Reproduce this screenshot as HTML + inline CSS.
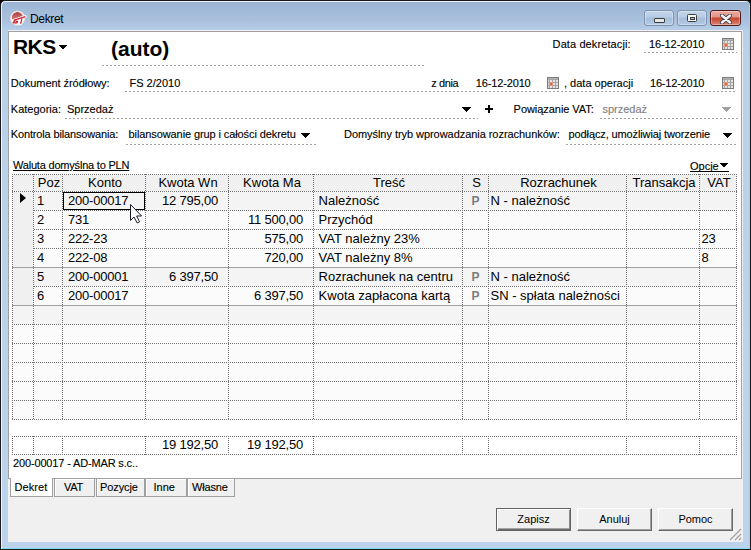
<!DOCTYPE html><html><head><meta charset="utf-8"><style>
html,body{margin:0;padding:0;}
body{width:751px;height:550px;position:relative;overflow:hidden;background:#000;font-family:"Liberation Sans", sans-serif;}
#win{position:absolute;left:0;top:0;width:751px;height:550px;box-sizing:border-box;border:1px solid #1a1a1a;border-radius:5px 5px 0 0;
 background:linear-gradient(180deg,#9bb4d4 0px,#a9c1de 20px,#b7cfe8 30px,#bad1ea 60px,#bcd3eb 550px);
 box-shadow:inset 1px 1px 0 rgba(255,255,255,0.8), inset -1px -1px 0 #7fe0f4;}
.t{position:absolute;white-space:nowrap;}
.g{position:absolute;white-space:nowrap;font-size:13px;line-height:16px;color:#000;}
.cb{position:absolute;top:10px;height:14px;border:1px solid #7d92ae;border-radius:3px;box-sizing:content-box;
 background:linear-gradient(180deg,#c4d5eb 0,#b8cce5 6px,#a6bddb 7px,#b4cbe6 14px);box-shadow:inset 0 0 0 1px rgba(255,255,255,0.35)}
.cl{border-color:#4d1a1a;background:linear-gradient(180deg,#eca89e 0,#e3968a 6px,#c4442c 7px,#dc8470 14px);}
.btn{position:absolute;top:508px;width:75px;height:23px;box-sizing:border-box;background:#f0f0f0;font-size:11px;line-height:21px;text-align:center;color:#000;
 border-top:1px solid #fff;border-left:1px solid #fff;border-right:1px solid #696969;border-bottom:1px solid #696969;box-shadow:inset -1px -1px 0 #a0a0a0;}
.def{border:1px solid #646464;box-shadow:inset 1px 1px 0 #fff, inset 0 -1px 0 #6a6a6a, inset -1px -1px 0 #8a8a8a, inset 0 -2px 0 #a8a8a8;}
</style></head><body>
<div id="win"></div>
<svg style="position:absolute;left:6px;top:8px" width="24" height="20" viewBox="0 0 24 20"><defs><linearGradient id="dg" x1="0" y1="0" x2="0" y2="1"><stop offset="0" stop-color="#a83c3c"/><stop offset="1" stop-color="#d88282"/></linearGradient></defs><circle cx="11.6" cy="10.2" r="7.1" fill="#fdfbfb" stroke="#e2dcdc" stroke-width="1.1"/><path d="M6 11.6 A5.5 5.5 0 0 1 16.8 8 Z" fill="url(#dg)"/><path d="M7.6 12.4 L19.4 8.6 M9.9 11.6 L6.9 14.8 L11 14.8 L11.6 13.4 L9.6 13.4 M15.9 10.6 L14.6 15.8" stroke="#fff" stroke-width="2.6" fill="none" stroke-linejoin="round" stroke-linecap="round"/><path d="M7.6 12.4 L19.4 8.6 M9.9 11.6 L6.9 14.8 L11 14.8 L11.6 13.4 L9.6 13.4 M15.9 10.6 L14.6 15.8" stroke="#c8202a" stroke-width="1.2" fill="none" stroke-linejoin="round"/></svg>
<div class="t" style="left:30px;top:11.84px;font-size:12px;line-height:14px;color:#000;font-weight:normal;letter-spacing:-0.35px;">Dekret</div>
<div class="cb" style="left:644px;width:28px"><div style="position:absolute;left:9px;top:7px;width:9px;height:3px;border:1px solid #3d3d3d;border-radius:1px;background:#e6e6e6"></div></div>
<div class="cb" style="left:677px;width:28px"><div style="position:absolute;left:9px;top:3px;width:8px;height:6px;border:1.5px solid #3d3d3d;border-radius:1.5px;background:#f6f6f6"><div style="position:absolute;left:2px;top:2px;width:3px;height:1px;border:1px solid #3d3d3d;background:#a9bfdc"></div></div></div>
<div class="cb cl" style="left:710px;width:29px"><svg style="position:absolute;left:9px;top:2.5px" width="12" height="10" viewBox="0 0 12 10"><path d="M2 1.5 L10 8.5 M10 1.5 L2 8.5" stroke="#3a3a4a" stroke-width="4.2" stroke-linecap="round"/><path d="M2 1.5 L10 8.5 M10 1.5 L2 8.5" stroke="#f4f4f4" stroke-width="2.4" stroke-linecap="round"/></svg></div>
<div style="position:absolute;left:8px;top:30px;width:735px;height:512px;background:#f0f0f0"></div>
<div style="position:absolute;left:8px;top:31px;width:734px;height:448px;background:#fff;border:1px solid #a0a0a0;box-sizing:border-box"></div>
<div class="t" style="left:13px;top:33.72px;font-size:21px;line-height:25px;color:#000;font-weight:bold;letter-spacing:-0.6px;">RKS</div>
<svg style="position:absolute;left:59px;top:45px" width="8" height="4" shape-rendering="crispEdges" fill="#000"><rect x="0" y="0" width="8" height="1"/><rect x="1" y="1" width="6" height="1"/><rect x="2" y="2" width="4" height="1"/><rect x="3" y="3" width="2" height="1"/></svg>
<div class="t" style="left:111px;top:35.72px;font-size:21px;line-height:25px;color:#000;font-weight:bold;letter-spacing:0px;">(auto)</div>
<div style="position:absolute;left:102px;top:65px;width:322px;height:1px;background:repeating-linear-gradient(90deg,#a0a0a0 0 2px,transparent 2px 4px);background-position:0px 0"></div>
<div class="t" style="left:552.6px;top:38.09px;font-size:11px;line-height:13px;color:#000;font-weight:normal;letter-spacing:0.1px;-webkit-text-stroke:0.12px #000;">Data dekretacji:</div>
<div class="t" style="left:649px;top:38.09px;font-size:11px;line-height:13px;color:#000;font-weight:normal;letter-spacing:-0.1px;-webkit-text-stroke:0.12px #000;">16-12-2010</div>
<svg style="position:absolute;left:722px;top:38px" width="12" height="12" viewBox="0 0 12 12" shape-rendering="crispEdges"><rect x="0" y="0" width="12" height="12" fill="#7c7c7c"/><rect x="1" y="1" width="10" height="10" fill="#a4a4a4"/><rect x="1" y="1" width="10" height="1" fill="#b4b4b4"/><rect x="3" y="3" width="2" height="2" fill="#e4e4e4"/><rect x="3" y="6" width="2" height="2" fill="#e4e4e4"/><rect x="3" y="9" width="2" height="2" fill="#e4e4e4"/><rect x="6" y="3" width="2" height="2" fill="#e4e4e4"/><rect x="6" y="6" width="2" height="2" fill="#e4e4e4"/><rect x="6" y="9" width="2" height="2" fill="#e4e4e4"/><rect x="9" y="3" width="2" height="2" fill="#e4e4e4"/><rect x="9" y="6" width="2" height="2" fill="#e4e4e4"/><rect x="9" y="9" width="2" height="2" fill="#e4e4e4"/><rect x="1" y="3" width="1" height="2" fill="#d8d8d8"/><rect x="1" y="6" width="1" height="2" fill="#d8d8d8"/><rect x="1" y="9" width="1" height="2" fill="#d8d8d8"/><rect x="2" y="5" width="4" height="4" fill="#d99a86"/><rect x="3" y="6" width="2" height="2" fill="#f0603a"/></svg>
<div style="position:absolute;left:644px;top:52px;width:93px;height:1px;background:repeating-linear-gradient(90deg,#a0a0a0 0 2px,transparent 2px 4px);background-position:0px 0"></div>
<div class="t" style="left:10.8px;top:77.09px;font-size:11px;line-height:13px;color:#000;font-weight:normal;letter-spacing:-0.05px;-webkit-text-stroke:0.12px #000;">Dokument źródłowy:</div>
<div class="t" style="left:129.5px;top:77.09px;font-size:11px;line-height:13px;color:#000;font-weight:normal;letter-spacing:0px;-webkit-text-stroke:0.12px #000;">FS 2/2010</div>
<div class="t" style="left:431.2px;top:77.09px;font-size:11px;line-height:13px;color:#000;font-weight:normal;letter-spacing:-0.4px;-webkit-text-stroke:0.12px #000;">z dnia</div>
<div class="t" style="left:475.8px;top:77.09px;font-size:11px;line-height:13px;color:#000;font-weight:normal;letter-spacing:-0.15px;-webkit-text-stroke:0.12px #000;">16-12-2010</div>
<svg style="position:absolute;left:547px;top:77px" width="12" height="12" viewBox="0 0 12 12" shape-rendering="crispEdges"><rect x="0" y="0" width="12" height="12" fill="#7c7c7c"/><rect x="1" y="1" width="10" height="10" fill="#a4a4a4"/><rect x="1" y="1" width="10" height="1" fill="#b4b4b4"/><rect x="3" y="3" width="2" height="2" fill="#e4e4e4"/><rect x="3" y="6" width="2" height="2" fill="#e4e4e4"/><rect x="3" y="9" width="2" height="2" fill="#e4e4e4"/><rect x="6" y="3" width="2" height="2" fill="#e4e4e4"/><rect x="6" y="6" width="2" height="2" fill="#e4e4e4"/><rect x="6" y="9" width="2" height="2" fill="#e4e4e4"/><rect x="9" y="3" width="2" height="2" fill="#e4e4e4"/><rect x="9" y="6" width="2" height="2" fill="#e4e4e4"/><rect x="9" y="9" width="2" height="2" fill="#e4e4e4"/><rect x="1" y="3" width="1" height="2" fill="#d8d8d8"/><rect x="1" y="6" width="1" height="2" fill="#d8d8d8"/><rect x="1" y="9" width="1" height="2" fill="#d8d8d8"/><rect x="2" y="5" width="4" height="4" fill="#d99a86"/><rect x="3" y="6" width="2" height="2" fill="#f0603a"/></svg>
<div class="t" style="left:564px;top:77.09px;font-size:11px;line-height:13px;color:#000;font-weight:normal;letter-spacing:0px;-webkit-text-stroke:0.12px #000;">, data operacji</div>
<div class="t" style="left:650px;top:77.09px;font-size:11px;line-height:13px;color:#000;font-weight:normal;letter-spacing:-0.2px;-webkit-text-stroke:0.12px #000;">16-12-2010</div>
<svg style="position:absolute;left:722px;top:77px" width="12" height="12" viewBox="0 0 12 12" shape-rendering="crispEdges"><rect x="0" y="0" width="12" height="12" fill="#7c7c7c"/><rect x="1" y="1" width="10" height="10" fill="#a4a4a4"/><rect x="1" y="1" width="10" height="1" fill="#b4b4b4"/><rect x="3" y="3" width="2" height="2" fill="#e4e4e4"/><rect x="3" y="6" width="2" height="2" fill="#e4e4e4"/><rect x="3" y="9" width="2" height="2" fill="#e4e4e4"/><rect x="6" y="3" width="2" height="2" fill="#e4e4e4"/><rect x="6" y="6" width="2" height="2" fill="#e4e4e4"/><rect x="6" y="9" width="2" height="2" fill="#e4e4e4"/><rect x="9" y="3" width="2" height="2" fill="#e4e4e4"/><rect x="9" y="6" width="2" height="2" fill="#e4e4e4"/><rect x="9" y="9" width="2" height="2" fill="#e4e4e4"/><rect x="1" y="3" width="1" height="2" fill="#d8d8d8"/><rect x="1" y="6" width="1" height="2" fill="#d8d8d8"/><rect x="1" y="9" width="1" height="2" fill="#d8d8d8"/><rect x="2" y="5" width="4" height="4" fill="#d99a86"/><rect x="3" y="6" width="2" height="2" fill="#f0603a"/></svg>
<div style="position:absolute;left:125px;top:91px;width:612px;height:1px;background:repeating-linear-gradient(90deg,#a0a0a0 0 2px,transparent 2px 4px);background-position:0px 0"></div>
<div class="t" style="left:10.8px;top:103.19px;font-size:11px;line-height:13px;color:#000;font-weight:normal;letter-spacing:0px;-webkit-text-stroke:0.12px #000;">Kategoria:</div>
<div class="t" style="left:67px;top:103.19px;font-size:11px;line-height:13px;color:#000;font-weight:normal;letter-spacing:0px;-webkit-text-stroke:0.12px #000;">Sprzedaż</div>
<svg style="position:absolute;left:462px;top:107px" width="9" height="5" shape-rendering="crispEdges" fill="#000"><rect x="0" y="0" width="9" height="1"/><rect x="1" y="1" width="7" height="1"/><rect x="2" y="2" width="5" height="1"/><rect x="3" y="3" width="3" height="1"/><rect x="4" y="4" width="1" height="1"/></svg>
<div style="position:absolute;left:65px;top:118px;width:413px;height:1px;background:repeating-linear-gradient(90deg,#a0a0a0 0 2px,transparent 2px 4px);background-position:0px 0"></div>
<div style="position:absolute;left:485px;top:108px;width:8px;height:2px;background:#000"></div>
<div style="position:absolute;left:488px;top:105px;width:2px;height:8px;background:#000"></div>
<div class="t" style="left:513.6px;top:103.19px;font-size:11px;line-height:13px;color:#000;font-weight:normal;letter-spacing:-0.05px;-webkit-text-stroke:0.12px #000;">Powiązanie VAT:</div>
<div class="t" style="left:602.4px;top:103.19px;font-size:11px;line-height:13px;color:#808080;font-weight:normal;letter-spacing:0px;-webkit-text-stroke:0.12px #808080;">sprzedaż</div>
<svg style="position:absolute;left:722px;top:107px" width="9" height="5" shape-rendering="crispEdges" fill="#a0a0a0"><rect x="0" y="0" width="9" height="1"/><rect x="1" y="1" width="7" height="1"/><rect x="2" y="2" width="5" height="1"/><rect x="3" y="3" width="3" height="1"/><rect x="4" y="4" width="1" height="1"/></svg>
<div style="position:absolute;left:600px;top:118px;width:138px;height:1px;background:repeating-linear-gradient(90deg,#a0a0a0 0 2px,transparent 2px 4px);background-position:0px 0"></div>
<div class="t" style="left:10.8px;top:128.39px;font-size:11px;line-height:13px;color:#000;font-weight:normal;letter-spacing:-0.15px;-webkit-text-stroke:0.12px #000;">Kontrola bilansowania:</div>
<div class="t" style="left:128.6px;top:128.39px;font-size:11px;line-height:13px;color:#000;font-weight:normal;letter-spacing:-0.1px;-webkit-text-stroke:0.12px #000;">bilansowanie grup i całości dekretu</div>
<svg style="position:absolute;left:301px;top:133px" width="9" height="5" shape-rendering="crispEdges" fill="#000"><rect x="0" y="0" width="9" height="1"/><rect x="1" y="1" width="7" height="1"/><rect x="2" y="2" width="5" height="1"/><rect x="3" y="3" width="3" height="1"/><rect x="4" y="4" width="1" height="1"/></svg>
<div style="position:absolute;left:126px;top:144px;width:190px;height:1px;background:repeating-linear-gradient(90deg,#a0a0a0 0 2px,transparent 2px 4px);background-position:0px 0"></div>
<div class="t" style="left:344px;top:128.39px;font-size:11px;line-height:13px;color:#000;font-weight:normal;letter-spacing:-0.05px;-webkit-text-stroke:0.12px #000;">Domyślny tryb wprowadzania rozrachunków:</div>
<div class="t" style="left:568.6px;top:128.39px;font-size:11px;line-height:13px;color:#000;font-weight:normal;letter-spacing:-0.12px;-webkit-text-stroke:0.12px #000;">podłącz, umożliwiaj tworzenie</div>
<svg style="position:absolute;left:723px;top:133px" width="9" height="5" shape-rendering="crispEdges" fill="#000"><rect x="0" y="0" width="9" height="1"/><rect x="1" y="1" width="7" height="1"/><rect x="2" y="2" width="5" height="1"/><rect x="3" y="3" width="3" height="1"/><rect x="4" y="4" width="1" height="1"/></svg>
<div style="position:absolute;left:566px;top:144px;width:171px;height:1px;background:repeating-linear-gradient(90deg,#a0a0a0 0 2px,transparent 2px 4px);background-position:0px 0"></div>
<div class="t" style="left:13px;top:159.19px;font-size:11px;line-height:13px;color:#000;font-weight:normal;letter-spacing:-0.2px;-webkit-text-stroke:0.12px #000;text-decoration:underline">Waluta domyślna to PLN</div>
<div class="t" style="left:690px;top:159.89px;font-size:11px;line-height:13px;color:#000;font-weight:normal;letter-spacing:0px;-webkit-text-stroke:0.12px #000;">Opcje</div>
<div style="position:absolute;left:690px;top:171px;width:39px;height:1px;background:#000"></div>
<svg style="position:absolute;left:720px;top:163px" width="8" height="4" shape-rendering="crispEdges" fill="#000"><rect x="0" y="0" width="8" height="1"/><rect x="1" y="1" width="6" height="1"/><rect x="2" y="2" width="4" height="1"/><rect x="3" y="3" width="2" height="1"/></svg>
<div style="position:absolute;left:13px;top:175px;width:723px;height:16px;background:#f0f0f0"></div>
<div style="position:absolute;left:34px;top:192px;width:702px;height:18px;background:#f4f4f4"></div>
<div style="position:absolute;left:34px;top:211px;width:702px;height:18px;background:#fbfbfb"></div>
<div style="position:absolute;left:34px;top:230px;width:702px;height:18px;background:#fbfbfb"></div>
<div style="position:absolute;left:34px;top:249px;width:702px;height:18px;background:#fbfbfb"></div>
<div style="position:absolute;left:34px;top:268px;width:702px;height:18px;background:#f4f4f4"></div>
<div style="position:absolute;left:34px;top:287px;width:702px;height:18px;background:#fbfbfb"></div>
<div style="position:absolute;left:34px;top:306px;width:702px;height:18px;background:#f4f4f4"></div>
<div style="position:absolute;left:34px;top:325px;width:702px;height:18px;background:#fbfbfb"></div>
<div style="position:absolute;left:34px;top:344px;width:702px;height:18px;background:#fbfbfb"></div>
<div style="position:absolute;left:34px;top:363px;width:702px;height:18px;background:#fbfbfb"></div>
<div style="position:absolute;left:34px;top:382px;width:702px;height:18px;background:#fbfbfb"></div>
<div style="position:absolute;left:34px;top:401px;width:702px;height:18px;background:#fbfbfb"></div>
<div style="position:absolute;left:13px;top:192px;width:20px;height:113px;background:#f0f0f0"></div>
<div style="position:absolute;left:13px;top:306px;width:20px;height:18px;background:#f4f4f4"></div>
<div style="position:absolute;left:13px;top:325px;width:20px;height:94px;background:#fbfbfb"></div>
<div style="position:absolute;left:12px;top:174px;width:725px;height:1px;background:repeating-linear-gradient(90deg,#6e6e6e 0 1px,transparent 1px 2px);background-position:0px 0"></div>
<div style="position:absolute;left:12px;top:191px;width:725px;height:1px;background:repeating-linear-gradient(90deg,#6e6e6e 0 1px,transparent 1px 2px);background-position:0px 0"></div>
<div style="position:absolute;left:34px;top:210px;width:703px;height:1px;background:repeating-linear-gradient(90deg,#6e6e6e 0 1px,transparent 1px 2px);background-position:0px 0"></div>
<div style="position:absolute;left:34px;top:229px;width:703px;height:1px;background:repeating-linear-gradient(90deg,#6e6e6e 0 1px,transparent 1px 2px);background-position:0px 0"></div>
<div style="position:absolute;left:34px;top:248px;width:703px;height:1px;background:repeating-linear-gradient(90deg,#6e6e6e 0 1px,transparent 1px 2px);background-position:0px 0"></div>
<div style="position:absolute;left:12px;top:267px;width:725px;height:1px;background:#a0a0a0"></div>
<div style="position:absolute;left:34px;top:286px;width:703px;height:1px;background:repeating-linear-gradient(90deg,#6e6e6e 0 1px,transparent 1px 2px);background-position:0px 0"></div>
<div style="position:absolute;left:12px;top:305px;width:725px;height:1px;background:#a0a0a0"></div>
<div style="position:absolute;left:12px;top:324px;width:725px;height:1px;background:repeating-linear-gradient(90deg,#6e6e6e 0 1px,transparent 1px 2px);background-position:0px 0"></div>
<div style="position:absolute;left:12px;top:343px;width:725px;height:1px;background:repeating-linear-gradient(90deg,#6e6e6e 0 1px,transparent 1px 2px);background-position:0px 0"></div>
<div style="position:absolute;left:12px;top:362px;width:725px;height:1px;background:repeating-linear-gradient(90deg,#6e6e6e 0 1px,transparent 1px 2px);background-position:0px 0"></div>
<div style="position:absolute;left:12px;top:381px;width:725px;height:1px;background:repeating-linear-gradient(90deg,#6e6e6e 0 1px,transparent 1px 2px);background-position:0px 0"></div>
<div style="position:absolute;left:12px;top:400px;width:725px;height:1px;background:repeating-linear-gradient(90deg,#6e6e6e 0 1px,transparent 1px 2px);background-position:0px 0"></div>
<div style="position:absolute;left:12px;top:419px;width:725px;height:1px;background:repeating-linear-gradient(90deg,#6e6e6e 0 1px,transparent 1px 2px);background-position:0px 0"></div>
<div style="position:absolute;left:12px;top:174px;width:1px;height:246px;background:repeating-linear-gradient(180deg,#6e6e6e 0 1px,transparent 1px 2px);background-position:0 0px"></div>
<div style="position:absolute;left:33px;top:174px;width:1px;height:246px;background:repeating-linear-gradient(180deg,#6e6e6e 0 1px,transparent 1px 2px);background-position:0 0px"></div>
<div style="position:absolute;left:62px;top:174px;width:1px;height:246px;background:repeating-linear-gradient(180deg,#6e6e6e 0 1px,transparent 1px 2px);background-position:0 0px"></div>
<div style="position:absolute;left:145px;top:174px;width:1px;height:246px;background:repeating-linear-gradient(180deg,#6e6e6e 0 1px,transparent 1px 2px);background-position:0 0px"></div>
<div style="position:absolute;left:228px;top:174px;width:1px;height:246px;background:repeating-linear-gradient(180deg,#6e6e6e 0 1px,transparent 1px 2px);background-position:0 0px"></div>
<div style="position:absolute;left:313px;top:174px;width:1px;height:246px;background:repeating-linear-gradient(180deg,#6e6e6e 0 1px,transparent 1px 2px);background-position:0 0px"></div>
<div style="position:absolute;left:462px;top:174px;width:1px;height:246px;background:repeating-linear-gradient(180deg,#6e6e6e 0 1px,transparent 1px 2px);background-position:0 0px"></div>
<div style="position:absolute;left:488px;top:174px;width:1px;height:246px;background:repeating-linear-gradient(180deg,#6e6e6e 0 1px,transparent 1px 2px);background-position:0 0px"></div>
<div style="position:absolute;left:626px;top:174px;width:1px;height:246px;background:repeating-linear-gradient(180deg,#6e6e6e 0 1px,transparent 1px 2px);background-position:0 0px"></div>
<div style="position:absolute;left:699px;top:174px;width:1px;height:246px;background:repeating-linear-gradient(180deg,#6e6e6e 0 1px,transparent 1px 2px);background-position:0 0px"></div>
<div style="position:absolute;left:736px;top:174px;width:1px;height:246px;background:repeating-linear-gradient(180deg,#6e6e6e 0 1px,transparent 1px 2px);background-position:0 0px"></div>
<div class="g" style="left:34.5px;width:29px;top:175.10px;text-align:center;color:#000;font-size:13px;font-weight:normal">Poz</div>
<div class="g" style="left:63.5px;width:83px;top:175.10px;text-align:center;color:#000;font-size:13px;font-weight:normal">Konto</div>
<div class="g" style="left:146.5px;width:83px;top:175.10px;text-align:center;color:#000;font-size:13px;font-weight:normal">Kwota Wn</div>
<div class="g" style="left:229.5px;width:85px;top:175.10px;text-align:center;color:#000;font-size:13px;font-weight:normal">Kwota Ma</div>
<div class="g" style="left:314.5px;width:149px;top:175.10px;text-align:center;color:#000;font-size:13px;font-weight:normal">Treść</div>
<div class="g" style="left:463.5px;width:26px;top:175.10px;text-align:center;color:#000;font-size:13px;font-weight:normal">S</div>
<div class="g" style="left:489.5px;width:138px;top:175.10px;text-align:center;color:#000;font-size:13px;font-weight:normal">Rozrachunek</div>
<div class="g" style="left:627.5px;width:73px;top:175.10px;text-align:center;color:#000;font-size:13px;font-weight:normal">Transakcja</div>
<div class="g" style="left:700.5px;width:37px;top:175.10px;text-align:center;color:#000;font-size:13px;font-weight:normal">VAT</div>
<div class="g" style="left:37px;top:192.90px;color:#000;font-size:13px;letter-spacing:-0.2px">1</div>
<div class="g" style="left:68px;top:192.90px;color:#000;font-size:13px;letter-spacing:-0.2px">200-00017</div>
<div class="g" style="right:533px;top:192.90px;text-align:right;color:#000;font-size:13px;letter-spacing:-0.2px">12 795,00</div>
<div class="g" style="left:318.6px;top:192.90px;color:#000;font-size:13px;letter-spacing:0px">Należność</div>
<div class="g" style="left:462.5px;width:26px;top:193.24px;text-align:center;color:#7c7c7c;font-size:12px;font-weight:bold">P</div>
<div class="g" style="left:490.5px;top:192.90px;color:#000;font-size:13px;letter-spacing:0px">N - należność</div>
<div class="g" style="left:37px;top:211.90px;color:#000;font-size:13px;letter-spacing:-0.2px">2</div>
<div class="g" style="left:68px;top:211.90px;color:#000;font-size:13px;letter-spacing:-0.2px">731</div>
<div class="g" style="right:448px;top:211.90px;text-align:right;color:#000;font-size:13px;letter-spacing:-0.2px">11 500,00</div>
<div class="g" style="left:318.6px;top:211.90px;color:#000;font-size:13px;letter-spacing:0px">Przychód</div>
<div class="g" style="left:37px;top:230.90px;color:#000;font-size:13px;letter-spacing:-0.2px">3</div>
<div class="g" style="left:68px;top:230.90px;color:#000;font-size:13px;letter-spacing:-0.2px">222-23</div>
<div class="g" style="right:448px;top:230.90px;text-align:right;color:#000;font-size:13px;letter-spacing:-0.2px">575,00</div>
<div class="g" style="left:318.6px;top:230.90px;color:#000;font-size:13px;letter-spacing:0px">VAT należny 23%</div>
<div class="g" style="left:701.5px;top:230.90px;color:#000;font-size:13px;letter-spacing:-0.2px">23</div>
<div class="g" style="left:37px;top:249.90px;color:#000;font-size:13px;letter-spacing:-0.2px">4</div>
<div class="g" style="left:68px;top:249.90px;color:#000;font-size:13px;letter-spacing:-0.2px">222-08</div>
<div class="g" style="right:448px;top:249.90px;text-align:right;color:#000;font-size:13px;letter-spacing:-0.2px">720,00</div>
<div class="g" style="left:318.6px;top:249.90px;color:#000;font-size:13px;letter-spacing:0px">VAT należny 8%</div>
<div class="g" style="left:701.5px;top:249.90px;color:#000;font-size:13px;letter-spacing:-0.2px">8</div>
<div class="g" style="left:37px;top:268.90px;color:#000;font-size:13px;letter-spacing:-0.2px">5</div>
<div class="g" style="left:68px;top:268.90px;color:#000;font-size:13px;letter-spacing:-0.2px">200-00001</div>
<div class="g" style="right:533px;top:268.90px;text-align:right;color:#000;font-size:13px;letter-spacing:-0.2px">6 397,50</div>
<div class="g" style="left:318.6px;top:268.90px;color:#000;font-size:13px;letter-spacing:0px">Rozrachunek na centru</div>
<div class="g" style="left:462.5px;width:26px;top:269.24px;text-align:center;color:#7c7c7c;font-size:12px;font-weight:bold">P</div>
<div class="g" style="left:490.5px;top:268.90px;color:#000;font-size:13px;letter-spacing:0px">N - należność</div>
<div class="g" style="left:37px;top:287.90px;color:#000;font-size:13px;letter-spacing:-0.2px">6</div>
<div class="g" style="left:68px;top:287.90px;color:#000;font-size:13px;letter-spacing:-0.2px">200-00017</div>
<div class="g" style="right:448px;top:287.90px;text-align:right;color:#000;font-size:13px;letter-spacing:-0.2px">6 397,50</div>
<div class="g" style="left:318.6px;top:287.90px;color:#000;font-size:13px;letter-spacing:0px">Kwota zapłacona kartą</div>
<div class="g" style="left:462.5px;width:26px;top:288.24px;text-align:center;color:#7c7c7c;font-size:12px;font-weight:bold">P</div>
<div class="g" style="left:490.5px;top:287.90px;color:#000;font-size:13px;letter-spacing:0px">SN - spłata należności</div>
<div style="position:absolute;left:63px;top:192px;width:82px;height:18px;border:1px solid #000;box-sizing:border-box"></div>
<svg style="position:absolute;left:129px;top:203px" width="14" height="21" viewBox="0 0 14 21"><path d="M1.5 1.5 L1.5 17.5 L5 14 L8.2 20 L10.6 18.8 L7.6 13 L12.6 13 Z" fill="#fff" stroke="#1a1a2a" stroke-width="1" stroke-linejoin="round"/></svg>
<div style="position:absolute;left:20px;top:193px;width:0;height:0;border-top:5.5px solid transparent;border-bottom:5.5px solid transparent;border-left:6px solid #000"></div>
<div style="position:absolute;left:12px;top:436px;width:725px;height:1px;background:repeating-linear-gradient(90deg,#6e6e6e 0 1px,transparent 1px 2px);background-position:0px 0"></div>
<div style="position:absolute;left:12px;top:454px;width:725px;height:1px;background:repeating-linear-gradient(90deg,#6e6e6e 0 1px,transparent 1px 2px);background-position:0px 0"></div>
<div style="position:absolute;left:12px;top:436px;width:1px;height:19px;background:repeating-linear-gradient(180deg,#6e6e6e 0 1px,transparent 1px 2px);background-position:0 0px"></div>
<div style="position:absolute;left:33px;top:436px;width:1px;height:19px;background:repeating-linear-gradient(180deg,#6e6e6e 0 1px,transparent 1px 2px);background-position:0 0px"></div>
<div style="position:absolute;left:62px;top:436px;width:1px;height:19px;background:repeating-linear-gradient(180deg,#6e6e6e 0 1px,transparent 1px 2px);background-position:0 0px"></div>
<div style="position:absolute;left:145px;top:436px;width:1px;height:19px;background:repeating-linear-gradient(180deg,#6e6e6e 0 1px,transparent 1px 2px);background-position:0 0px"></div>
<div style="position:absolute;left:228px;top:436px;width:1px;height:19px;background:repeating-linear-gradient(180deg,#6e6e6e 0 1px,transparent 1px 2px);background-position:0 0px"></div>
<div style="position:absolute;left:313px;top:436px;width:1px;height:19px;background:repeating-linear-gradient(180deg,#6e6e6e 0 1px,transparent 1px 2px);background-position:0 0px"></div>
<div style="position:absolute;left:462px;top:436px;width:1px;height:19px;background:repeating-linear-gradient(180deg,#6e6e6e 0 1px,transparent 1px 2px);background-position:0 0px"></div>
<div style="position:absolute;left:488px;top:436px;width:1px;height:19px;background:repeating-linear-gradient(180deg,#6e6e6e 0 1px,transparent 1px 2px);background-position:0 0px"></div>
<div style="position:absolute;left:626px;top:436px;width:1px;height:19px;background:repeating-linear-gradient(180deg,#6e6e6e 0 1px,transparent 1px 2px);background-position:0 0px"></div>
<div style="position:absolute;left:699px;top:436px;width:1px;height:19px;background:repeating-linear-gradient(180deg,#6e6e6e 0 1px,transparent 1px 2px);background-position:0 0px"></div>
<div style="position:absolute;left:736px;top:436px;width:1px;height:19px;background:repeating-linear-gradient(180deg,#6e6e6e 0 1px,transparent 1px 2px);background-position:0 0px"></div>
<div class="g" style="right:533px;top:437px;text-align:right;letter-spacing:-0.2px">19 192,50</div>
<div class="g" style="right:448px;top:437px;text-align:right;letter-spacing:-0.2px">19 192,50</div>
<div class="t" style="left:13px;top:456.69px;font-size:11px;line-height:13px;color:#000;font-weight:normal;letter-spacing:-0.15px;-webkit-text-stroke:0.12px #000;">200-00017 - AD-MAR s.c..</div>
<div style="position:absolute;left:8px;top:479px;width:734px;height:63px;background:#f0f0f0"></div>
<div style="position:absolute;left:10px;top:478px;width:43px;height:19px;background:#fff;border:1px solid #a0a0a0;border-top:none;box-sizing:border-box"></div>
<div style="position:absolute;left:54px;top:478px;width:41px;height:19px;background:#f0f0f0;border:1px solid #a0a0a0;box-shadow:inset 1px 1px 0 #fff;box-sizing:border-box"></div>
<div style="position:absolute;left:96px;top:478px;width:49px;height:19px;background:#f0f0f0;border:1px solid #a0a0a0;box-shadow:inset 1px 1px 0 #fff;box-sizing:border-box"></div>
<div style="position:absolute;left:145px;top:478px;width:42px;height:19px;background:#f0f0f0;border:1px solid #a0a0a0;box-shadow:inset 1px 1px 0 #fff;box-sizing:border-box"></div>
<div style="position:absolute;left:187px;top:478px;width:48px;height:19px;background:#f0f0f0;border:1px solid #a0a0a0;box-shadow:inset 1px 1px 0 #fff;box-sizing:border-box"></div>
<div class="t" style="left:14.5px;top:481.29px;font-size:11px;line-height:13px;color:#000;font-weight:normal;letter-spacing:0.1px;-webkit-text-stroke:0.12px #000;">Dekret</div>
<div class="t" style="left:64px;top:481.29px;font-size:11px;line-height:13px;color:#000;font-weight:normal;letter-spacing:-0.3px;-webkit-text-stroke:0.12px #000;">VAT</div>
<div class="t" style="left:100px;top:481.29px;font-size:11px;line-height:13px;color:#000;font-weight:normal;letter-spacing:-0.1px;-webkit-text-stroke:0.12px #000;">Pozycje</div>
<div class="t" style="left:153.5px;top:481.29px;font-size:11px;line-height:13px;color:#000;font-weight:normal;letter-spacing:0px;-webkit-text-stroke:0.12px #000;">Inne</div>
<div class="t" style="left:192px;top:481.29px;font-size:11px;line-height:13px;color:#000;font-weight:normal;letter-spacing:-0.15px;-webkit-text-stroke:0.12px #000;">Własne</div>
<div class="btn def" style="left:496px">Zapisz</div>
<div class="btn" style="left:577px">Anuluj</div>
<div class="btn" style="left:658px">Pomoc</div>
<svg style="position:absolute;left:728px;top:527px" width="14" height="14" viewBox="0 0 14 14"><path d="M13 2 L2 13 M13 7 L7 13 M13 11 L11 13" stroke="#a0a0a0" stroke-width="1.2"/></svg>
</body></html>
